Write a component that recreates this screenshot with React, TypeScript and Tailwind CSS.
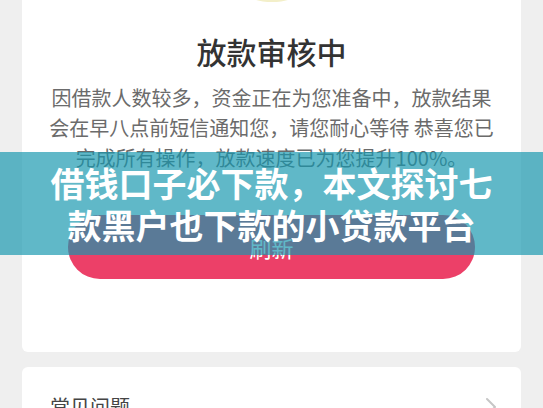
import React from 'react';

const bodyLines = [
  '因借款人数较多，资金正在为您准备中，放款结果',
  '会在早八点前短信通知您，请您耐心等待 恭喜您已',
  '完成所有操作，放款速度已为您提升100%。',
];

export default function App() {
  return (
    <div className="relative w-[543px] h-[408px] overflow-hidden bg-[#efefef] font-['Noto_Sans_CJK_SC','Noto_Sans',sans-serif]">
      {/* Status card */}
      <div className="mx-[22px] h-[352px] bg-white rounded-b-[6px] flex flex-col items-center">
        <svg width="60" height="4" viewBox="0 0 60 4" className="shrink-0">
          <ellipse cx="30" cy="-6" rx="24" ry="8" fill="#f3efc9" />
        </svg>
        <h1 className="mt-[27px] text-[30px] leading-[40px] text-[#333333] font-medium">放款审核中</h1>
        <div className="mt-[12px] text-[20px] leading-[30px] text-[#6b6b6b] text-center whitespace-pre">
          {bodyLines.map((line) => (
            <p key={line}>{line}</p>
          ))}
        </div>
        <button className="mt-[42px] w-[407px] h-[64px] rounded-full bg-[#ec4068] text-white text-[22px] flex items-center justify-center">
          刷新
        </button>
      </div>

      {/* FAQ card */}
      <div className="mx-[22px] mt-[15px] h-[80px] bg-white rounded-[6px] flex items-center justify-between pl-[28px] pr-[24px]">
        <span className="text-[20px] leading-[28px] text-[#444444]">常见问题</span>
        <svg width="12" height="20" viewBox="0 0 12 20" fill="none">
          <path d="M2 2 L10 10 L2 18" stroke="#c6c6c6" strokeWidth="2" strokeLinecap="round" strokeLinejoin="round" />
        </svg>
      </div>

      {/* Title banner */}
      <div className="absolute left-0 right-0 top-[152px] h-[103px] bg-[rgba(20,150,174,0.68)] flex flex-col items-center justify-center text-white font-bold text-[34px] leading-[42px]">
        <p>借钱口子必下款，本文探讨七</p>
        <p>款黑户也下款的小贷款平台</p>
      </div>
    </div>
  );
}
